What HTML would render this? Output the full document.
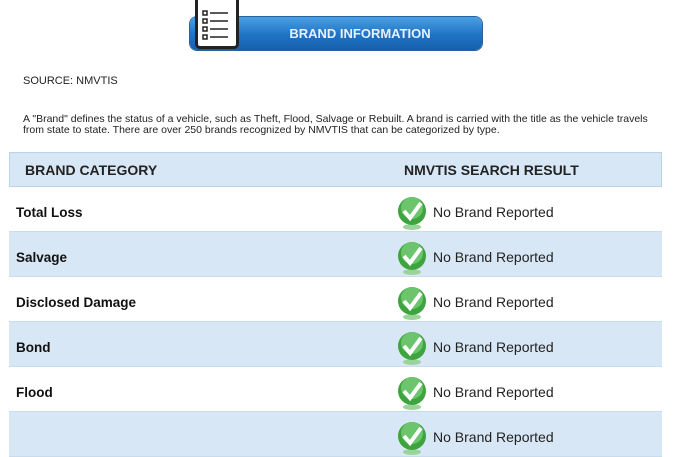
<!DOCTYPE html><html><head><style>
body{margin:0;width:676px;height:422px;overflow:hidden;background:#fff;font-family:"Liberation Sans",Arial,sans-serif;position:relative}
.ban{position:absolute;left:190px;top:17px;width:292px;height:33px;border-radius:7px;background:linear-gradient(#4aa0e4,#1f72c4 55%,#1660ae);box-shadow:0 0 0 1px #2a62a0}
.ban span{position:absolute;left:0;right:0;top:9px;text-align:center;padding-left:48px;color:#e8f2fc;font-weight:bold;font-size:13px}
.clip{position:absolute;left:195px;top:-6px;width:38px;height:49px;background:#fff;border:3px solid #222;border-radius:5px}
.t{position:absolute;left:23px;font-size:11px;color:#222}
.tbl{position:absolute;left:9px;top:152px;width:653px}
.r{height:44px;border-bottom:1px solid #c8dcee;position:relative}
.b{background:#d8e7f5}
.h{height:33px;background:#d8e7f5;border:1px solid #b8d2ea}
.h div{position:absolute;top:9px;font-weight:bold;font-size:14px;color:#222}
.c{position:absolute;left:7px;top:18px;font-weight:bold;font-size:13.5px;color:#111}
.n{position:absolute;left:424px;top:17px;font-size:14px;color:#222}
.ic{position:absolute;left:388px;top:8px}
</style></head><body>
<div class="ban"><span>BRAND INFORMATION</span></div>
<div class="clip"><svg width="38" height="49" viewBox="0 0 38 49"><g stroke="#222" stroke-width="1.5" fill="none"><rect x="5" y="14" width="4" height="4"/><rect x="5" y="22" width="4" height="4"/><rect x="5" y="30" width="4" height="4"/><rect x="5" y="38" width="4" height="4"/><path d="M12 16h18M12 24h18M12 32h18M12 40h18"/></g></svg></div>
<div class="t" style="top:75px">SOURCE: NMVTIS</div>
<div class="t" style="top:114px;width:630px;line-height:11px;font-size:10.5px">A "Brand" defines the status of a vehicle, such as Theft, Flood, Salvage or Rebuilt. A brand is carried with the title as the vehicle travels from state to state. There are over 250 brands recognized by NMVTIS that can be categorized by type.</div>
<div class="tbl">
<div class="r h"><div style="left:15px">BRAND CATEGORY</div><div style="left:394px">NMVTIS SEARCH RESULT</div></div>
<div class="r"><div class="c">Total Loss</div>ICON</div>
<div class="r b"><div class="c">Salvage</div>ICON</div>
<div class="r"><div class="c">Disclosed Damage</div>ICON</div>
<div class="r b"><div class="c">Bond</div>ICON</div>
<div class="r"><div class="c">Flood</div>ICON</div>
<div class="r b"><div class="c"></div>ICON</div>
</div>
<script>
var ic='<svg class="ic" width="30" height="36" viewBox="0 0 30 36"><ellipse cx="15" cy="32" rx="9" ry="3" fill="#9bd49b"/><circle cx="15" cy="16" r="14" fill="#3ea43e"/><circle cx="15" cy="13" r="11" fill="#6cc56c"/><path d="M7 16l6 7 11-15" stroke="#fff" stroke-width="4" fill="none"/></svg><div class="n">No Brand Reported</div>';
document.querySelectorAll('.r:not(.h)').forEach(function(e){e.innerHTML=e.innerHTML.replace('ICON',ic)});
</script>
</body></html>
